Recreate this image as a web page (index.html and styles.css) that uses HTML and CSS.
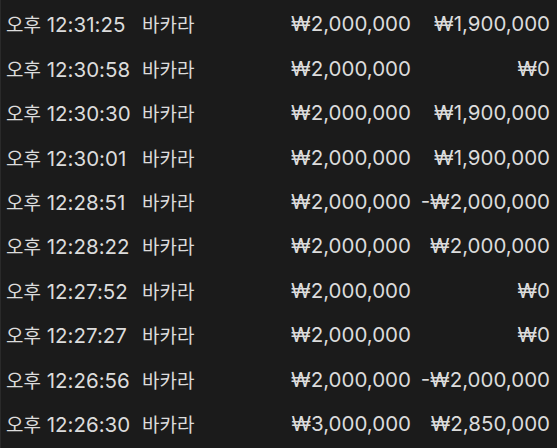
FILE: index.html
```html
<!DOCTYPE html>
<html lang="ko">
<head>
<meta charset="utf-8">
<link rel="stylesheet" href="styles.css">
</head>
<body>
<div class="list">
  <div class="row"><span class="time"><span class="ko">오후</span> 12:31:25</span><span class="game ko">바카라</span><span class="bet">₩2,000,000</span><span class="win">₩1,900,000</span></div>
  <div class="row"><span class="time"><span class="ko">오후</span> 12:30:58</span><span class="game ko">바카라</span><span class="bet">₩2,000,000</span><span class="win">₩0</span></div>
  <div class="row"><span class="time"><span class="ko">오후</span> 12:30:30</span><span class="game ko">바카라</span><span class="bet">₩2,000,000</span><span class="win">₩1,900,000</span></div>
  <div class="row"><span class="time"><span class="ko">오후</span> 12:30:01</span><span class="game ko">바카라</span><span class="bet">₩2,000,000</span><span class="win">₩1,900,000</span></div>
  <div class="row"><span class="time"><span class="ko">오후</span> 12:28:51</span><span class="game ko">바카라</span><span class="bet">₩2,000,000</span><span class="win">-₩2,000,000</span></div>
  <div class="row"><span class="time"><span class="ko">오후</span> 12:28:22</span><span class="game ko">바카라</span><span class="bet">₩2,000,000</span><span class="win">₩2,000,000</span></div>
  <div class="row"><span class="time"><span class="ko">오후</span> 12:27:52</span><span class="game ko">바카라</span><span class="bet">₩2,000,000</span><span class="win">₩0</span></div>
  <div class="row"><span class="time"><span class="ko">오후</span> 12:27:27</span><span class="game ko">바카라</span><span class="bet">₩2,000,000</span><span class="win">₩0</span></div>
  <div class="row"><span class="time"><span class="ko">오후</span> 12:26:56</span><span class="game ko">바카라</span><span class="bet">₩2,000,000</span><span class="win">-₩2,000,000</span></div>
  <div class="row"><span class="time"><span class="ko">오후</span> 12:26:30</span><span class="game ko">바카라</span><span class="bet">₩3,000,000</span><span class="win">₩2,850,000</span></div>
</div>
</body>
</html>
```
FILE: styles.css
```css
html, body {
  margin: 0;
  padding: 0;
  background: #1b1b1b;
  height: 100%;
  overflow: hidden;
}
body {
  border-left: 1px solid #2a2a2a;
  box-sizing: border-box;
}
.list {
  padding-top: 1.5px;
  font-family: Inter, "Noto Sans CJK KR", sans-serif;
  font-size: 20.5px;
  color: #dcdcdc;
}
.ko {
  font-size: 19px;
}
.row {
  display: grid;
  grid-template-columns: 136px 1fr 120px 139px;
  align-items: center;
  height: 44.44px;
  padding: 0 7px 0 5px;
  white-space: nowrap;
}
.bet, .win {
  text-align: right;
}
```
